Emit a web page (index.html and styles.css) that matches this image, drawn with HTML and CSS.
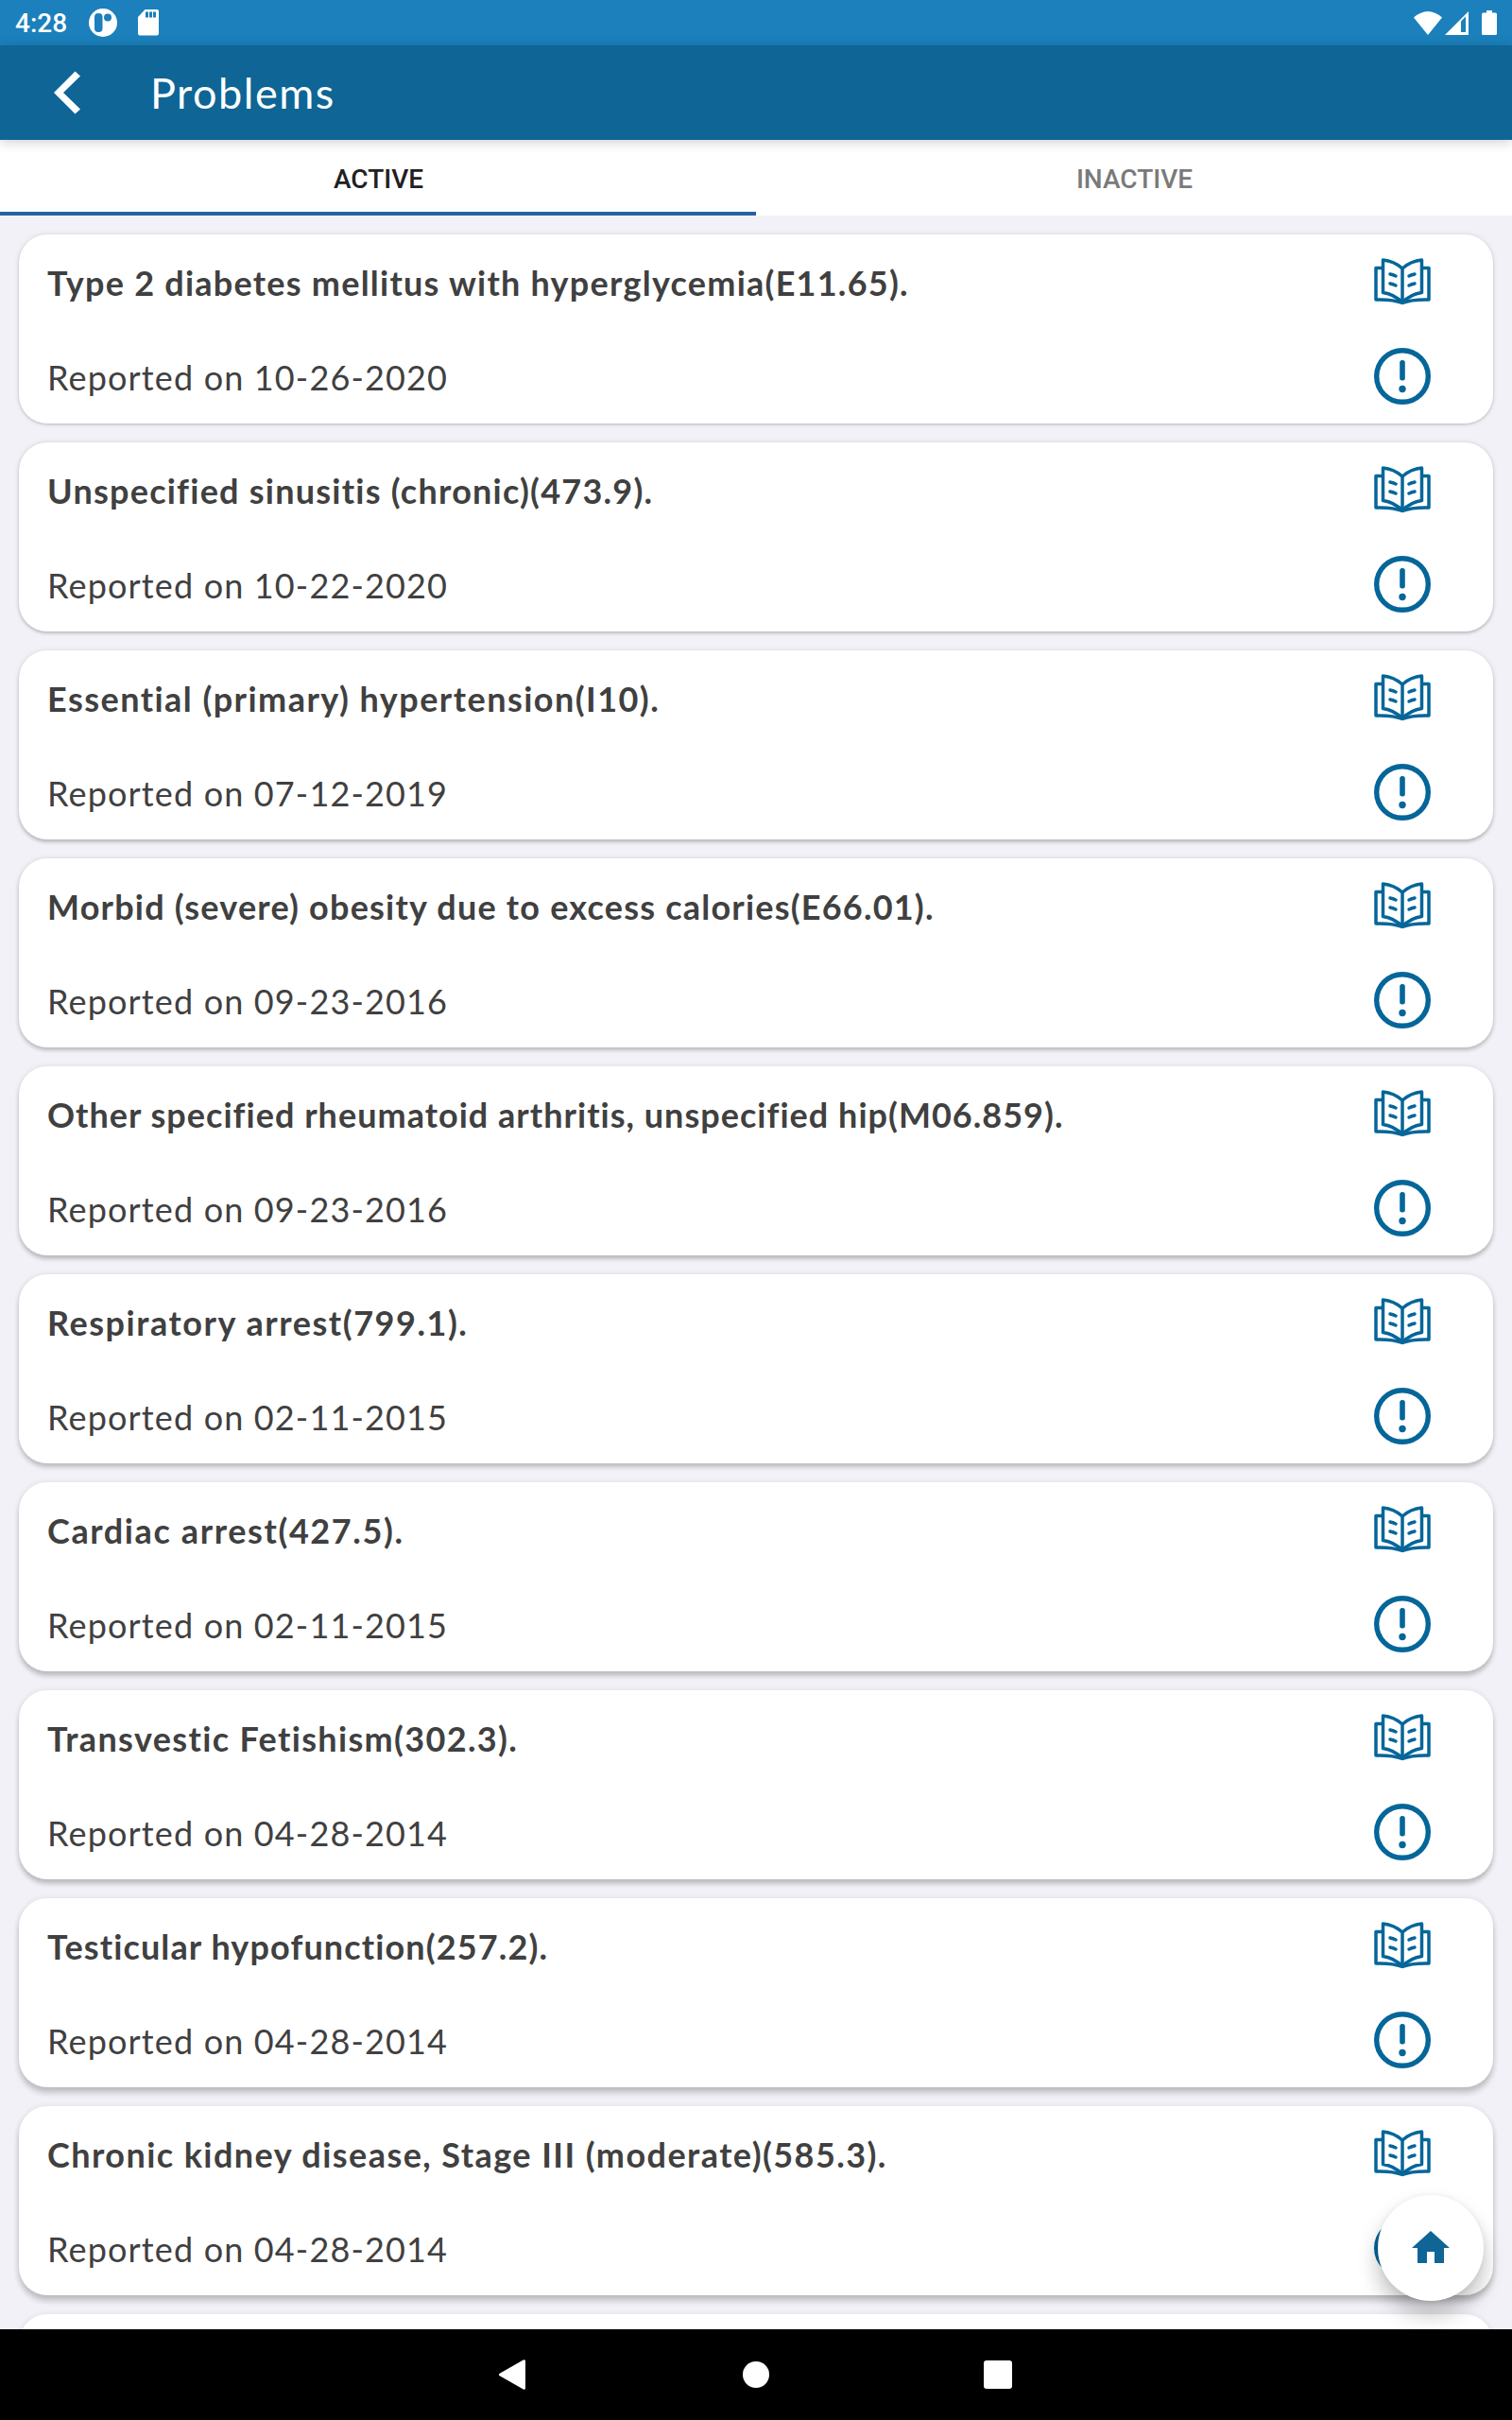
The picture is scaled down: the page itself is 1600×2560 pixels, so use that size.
FILE: index.html
```
<!DOCTYPE html>
<html lang="en">
<head>
  <meta charset="UTF-8" />
  <title>Problems</title>
  <link rel="stylesheet" href="styles.css">
</head>
<body>
  <div class="screen">
    <header class="status-bar">
      <span class="clock">4:28</span>
      <svg class="status-p" width="30" height="30" viewBox="0 0 30 30">
        <circle cx="15" cy="15" r="15" fill="#fff"/>
        <rect x="6" y="5" width="8.500" height="20" rx="4" fill="#1b80bb"/>
        <circle cx="20" cy="9.500" r="4" fill="#1b80bb"/>
      </svg>
      <svg class="status-sd" width="22" height="28" viewBox="0 0 22 28">
        <path d="M7.500 0H20a2 2 0 0 1 2 2v23.500a2 2 0 0 1-2 2H2a2 2 0 0 1-2-2V8z" fill="#fff"/>
        <path d="M8 2.500h3v6H8zM12 2.500h3v6h-3zM16 2.500h3v6h-3z" fill="#1b80bb"/>
      </svg>
      <svg class="status-wifi" width="30" height="25" viewBox="0 0 30 25">
        <path d="M0 6.500Q15-6.500 30 6.500L15 25z" fill="#fff"/>
      </svg>
      <svg class="status-signal" width="25" height="25" viewBox="0 0 25 25">
        <path fill-rule="evenodd" d="M0 25L25 0v25zM17 10.500V22h5V5.500z" fill="#fff"/>
      </svg>
      <svg class="status-battery" width="16" height="26" viewBox="0 0 16 26">
        <path d="M5 0h6v2.500h3.500A1.500 1.500 0 0 1 16 4v20.500a1.500 1.500 0 0 1-1.500 1.500h-13A1.500 1.500 0 0 1 0 24.500V4a1.500 1.500 0 0 1 1.500-1.500H5z" fill="#fff"/>
      </svg>
    </header>

    <div class="title-bar">
      <svg class="back" width="28" height="46" viewBox="0 0 28 46">
        <path d="M22.500.500L28 5.500 10 23l18 17.500-5.500 5L0 23z" fill="#fff"/>
      </svg>
      <h1>Problems</h1>
    </div>

    <nav class="tabs">
      <a class="tab active">Active</a>
      <a class="tab">Inactive</a>
    </nav>

    <main class="problem-list" id="problemList"></main>

    <footer class="nav-bar">
      <svg width="32" height="32" viewBox="0 0 32 32"><path d="M26.500 1.800v28.400L1.500 16z" fill="#fff" stroke="#fff" stroke-width="3" stroke-linejoin="round"/></svg>
      <svg width="32" height="32" viewBox="0 0 32 32"><circle cx="16" cy="16" r="14" fill="#fff"/></svg>
      <svg width="32" height="32" viewBox="0 0 32 32"><rect x="1" y="1" width="30" height="30" rx="3" fill="#fff"/></svg>
    </footer>

    <button class="home-button">
      <svg width="48" height="48" viewBox="0 0 24 24"><path d="M10 20v-6h4v6h5v-8h3L12 3 2 12h3v8z" fill="#0e6596"/></svg>
    </button>
  </div>

  <svg width="0" height="0" class="sprite">
    <symbol id="book" viewBox="0 0 60 50">
      <g fill="none" stroke="#046699" stroke-width="3.500" stroke-linejoin="round" stroke-linecap="round">
        <path d="M30 11Q21 3 9.500 2v34.500Q21 38 30 47Q39 38 50.500 36.500V2Q39 3 30 11z"/>
        <path d="M30 11v36"/>
        <path d="M9 10.500H2v33.500Q20 43.500 30 47.500Q40 43.500 58 44V10.500h-7"/>
        <path d="M17 17q3 .500 6 2M17 27q3 .500 6 2M43 17q-3 .500-6 2M43 27q-3 .500-6 2"/>
      </g>
    </symbol>
    <symbol id="alert" viewBox="0 0 60 60">
      <circle cx="30" cy="30" r="27.300" fill="none" stroke="#046699" stroke-width="5.400"/>
      <rect x="27.200" y="13" width="5.600" height="21.500" rx="2.500" fill="#046699"/>
      <circle cx="30" cy="43.500" r="3.700" fill="#046699"/>
    </symbol>
  </svg>

  <script>
    const problems = [
      { title: 'Type 2 diabetes mellitus with hyperglycemia(E11.65).', date: '10-26-2020', spacing: 1.24 },
      { title: 'Unspecified sinusitis (chronic)(473.9).', date: '10-22-2020', spacing: 1.24 },
      { title: 'Essential (primary) hypertension(I10).', date: '07-12-2019', spacing: 1.46 },
      { title: 'Morbid (severe) obesity due to excess calories(E66.01).', date: '09-23-2016', spacing: 1.21 },
      { title: 'Other specified rheumatoid arthritis, unspecified hip(M06.859).', date: '09-23-2016', spacing: 1.02 },
      { title: 'Respiratory arrest(799.1).', date: '02-11-2015', spacing: 1.54 },
      { title: 'Cardiac arrest(427.5).', date: '02-11-2015', spacing: 1.6 },
      { title: 'Transvestic Fetishism(302.3).', date: '04-28-2014', spacing: 1.34 },
      { title: 'Testicular hypofunction(257.2).', date: '04-28-2014', spacing: 1.12 },
      { title: 'Chronic kidney disease, Stage III (moderate)(585.3).', date: '04-28-2014', spacing: 1.43 },
      { title: '', date: '', spacing: 0 }
    ];

    const list = document.getElementById('problemList');
    problems.forEach((problem, index) => {
      list.innerHTML += `<article class="card" style="--depth: ${index}; --spacing: ${problem.spacing}px">
        <div class="card-text">
          <h2>${problem.title}</h2>
          <p>${problem.date ? 'Reported on ' + problem.date : ''}</p>
        </div>
        <div class="card-icons">
          <svg width="60" height="50"><use href="#book"/></svg>
          <svg width="60" height="60"><use href="#alert"/></svg>
        </div>
      </article>`;
    });
  </script>
</body>
</html>
```
FILE: styles.css
```
* {
  box-sizing: border-box;
}
body {
  margin: 0;
  background: #f2f1f7;
  font-family: Lato, "Open Sans", sans-serif;
  color: #404040;
}
.screen {
  position: relative;
  width: 1600px;
  height: 2560px;
  display: flex;
  flex-direction: column;
  overflow: hidden;
}
.sprite {
  position: absolute;
}

.status-bar {
  flex: none;
  display: flex;
  align-items: center;
  height: 48px;
  padding: 0 16px;
  background: #1b80bb;
  color: #fff;
}
.clock {
  width: 78px;
  font: 500 28px/48px Roboto, sans-serif;
  padding-top: 2px;
}
.status-sd {
  margin-left: 22px;
}
.status-wifi {
  margin-left: auto;
}
.status-signal {
  margin-left: 3px;
}
.status-battery {
  margin-left: 14px;
}

.title-bar {
  flex: none;
  z-index: 1;
  display: flex;
  align-items: center;
  height: 100px;
  padding-left: 57px;
  background: #0e6596;
  box-shadow: 0 2px 12px rgba(0,0,0,0.2);
}
.title-bar h1 {
  margin: 0 0 0 74px;
  font-size: 45px;
  font-weight: 400;
  letter-spacing: 1.5px;
  color: #fff;
}

.tabs {
  flex: none;
  display: flex;
  height: 80px;
  background: #fff;
}
.tab {
  flex: 1;
  padding: 2px 0 0 1px;
  border-bottom: 4px solid transparent;
  font: 500 28px/80px Roboto, sans-serif;
  text-align: center;
  text-transform: uppercase;
  color: #7a7a7a;
}
.tab.active {
  border-color: #2462a0;
  color: #212121;
}

.problem-list {
  flex: 1;
  min-height: 0;
  display: flex;
  flex-direction: column;
  gap: 20px;
  padding: 20px;
  overflow: hidden;
}
.card {
  flex: none;
  display: flex;
  justify-content: space-between;
  height: 200px;
  padding: 0 66px 0 30px;
  background: #fff;
  border-radius: 30px;
  box-shadow:
    0 calc(1px + var(--depth) * 0.55px) calc(3px + var(--depth) * 0.4px) rgba(0,0,0,0.2),
    0 0 6px rgba(0,0,0,0.08);
}
.card h2,
.card p {
  margin: 0;
  height: 100px;
  font-size: 36px;
  line-height: 102px;
  white-space: nowrap;
}
.card h2 {
  letter-spacing: var(--spacing);
}
.card p {
  font-weight: 400;
  letter-spacing: 1.15px;
}
.card-icons {
  display: flex;
  flex-direction: column;
  gap: 45px;
  padding-top: 25px;
}

.nav-bar {
  flex: none;
  z-index: 1;
  display: flex;
  justify-content: center;
  align-items: center;
  gap: 224px;
  height: 96px;
  background: #000;
}

.home-button {
  position: absolute;
  right: 30px;
  bottom: 126px;
  display: flex;
  justify-content: center;
  align-items: center;
  width: 112px;
  height: 112px;
  padding: 0;
  border: none;
  border-radius: 50%;
  background: #fff;
  box-shadow: 0 14px 22px rgba(0,0,0,0.25), 0 0 6px rgba(0,0,0,0.06);
}
```
